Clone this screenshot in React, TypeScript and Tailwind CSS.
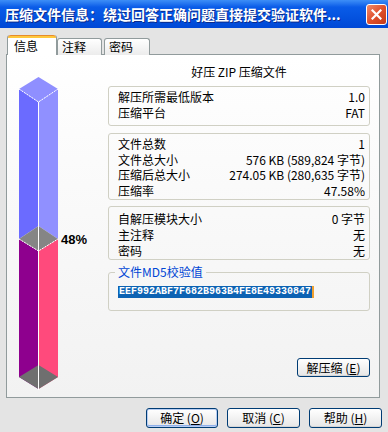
import React from 'react'

const cjk = "font-['Noto_Sans_CJK_SC','Liberation_Sans',sans-serif]"

function Row({ label, value }: { label: string; value: string }) {
  return (
    <div className="flex justify-between pl-[9px] pr-[4px]">
      <span>{label}</span>
      <span>{value}</span>
    </div>
  )
}

function XpButton({ label, keyChar, className = '', primary = false }: { label: string; keyChar: string; className?: string; primary?: boolean }) {
  return (
    <button
      type="button"
      className={`flex items-center justify-center rounded-[3px] border border-[#003c74] bg-linear-to-b from-white to-[#e6e6e6] text-[12px] leading-none text-black ${
        primary ? 'shadow-[inset_0_0_0_1px_#b7cdf3,inset_0_-1px_0_1px_#8fb0ea]' : 'shadow-[inset_0_-1px_0_0_#d6d6d6]'
      } ${className}`}
    >
      {label} (<span className="underline">{keyChar}</span>)
    </button>
  )
}

function Bar() {
  return (
    <svg width="40" height="314" viewBox="0 0 40 314" className="block">
      {/* upper part */}
      <polygon points="0,12 19.5,25 19.5,149 0,162" fill="#6b6bff" />
      <polygon points="19.5,25 39,12 39,162 19.5,149" fill="#9090ff" />
      <polygon points="19.5,0 39,12 19.5,25 0,12" fill="#8f8fff" />
      {/* lower part */}
      <polygon points="0,162 19.5,174 19.5,312 0,300" fill="#8e008e" />
      <polygon points="19.5,174 39,162 39,300 19.5,312" fill="#ff4a7c" />
      <polygon points="19.5,149 39,162 19.5,174 0,162" fill="#858585" />
      <polygon points="19.5,288 39,300 19.5,312 0,300" fill="#6f6f6f" />
      {/* highlight edges */}
      <polyline points="0,12 19.5,25 39,12" fill="none" stroke="#fff" strokeWidth="1" strokeDasharray="2 1" />
      <polyline points="0,162 19.5,174 39,162" fill="none" stroke="#fff" strokeWidth="1" strokeDasharray="2 1" />
      <line x1="19.5" y1="25" x2="19.5" y2="313" stroke="#fff" strokeWidth="1" />
    </svg>
  )
}

export default function App() {
  return (
    <div className={`w-[388px] h-[432px] overflow-hidden bg-[#e4e4e4] text-[12px] text-black ${cjk}`}>
      {/* title bar */}
      <div className="flex h-[28px] items-center justify-between bg-linear-to-b from-[#3d8ef7] via-[#0a5ce8] via-25% to-[#0048d6] pl-[5px] pr-[1px]">
        <span className="text-[14px] font-bold text-white [text-shadow:1px_1px_0_#0a2a8c] whitespace-nowrap">
          压缩文件信息：绕过回答正确问题直接提交验证软件...
        </span>
        <div className="flex h-[21px] w-[21px] items-center justify-center rounded-[3px] border border-white bg-linear-to-br from-[#f08a6a] via-[#e0502c] to-[#c23a18]">
          <svg width="11" height="11" viewBox="0 0 11 11">
            <path d="M1.5 1.5 L9.5 9.5 M9.5 1.5 L1.5 9.5" stroke="#fff" strokeWidth="2.2" strokeLinecap="square" />
          </svg>
        </div>
      </div>

      {/* tabs */}
      <div className="relative z-10 mt-[7px] mb-[-1px] flex items-end pl-[7px]">
        <div className="flex h-[20px] w-[50px] flex-col rounded-t-[3px] border-x border-[#919b9c] bg-white">
          <div className="h-[3px] rounded-t-[3px] bg-[#ffc83c] border-t border-[#e68b2c]" />
          <div className="pl-[6px] leading-[15px]">信息</div>
        </div>
        <div className="flex h-[17px] w-[45px] items-center rounded-t-[3px] border border-b-0 border-[#919b9c] bg-linear-to-b from-white to-[#ececec] pl-[4px]">
          注释
        </div>
        <div className="ml-[2px] flex h-[17px] w-[46px] items-center rounded-t-[3px] border border-b-0 border-[#919b9c] bg-linear-to-b from-white to-[#ececec] pl-[4px]">
          密码
        </div>
      </div>

      {/* panel */}
      <div className="mx-[6px] flex h-[344px] w-[374px] border border-[#919b9c] bg-linear-to-b from-white to-[#f2f2f2]">
        <div className="flex w-[101px] items-start pl-[12px] pt-[22px]">
          <Bar />
          <span className="ml-[2px] mt-[156px] text-[13px] font-bold leading-[14px] font-['Liberation_Sans',sans-serif]">48%</span>
        </div>

        <div className="flex w-[262px] flex-col pt-[9px]">
          <div className="text-center leading-[16px]">好压 ZIP 压缩文件</div>

          <div className="mt-[6px] rounded-[3px] border border-[#d0d0c4] pt-[2px] pb-[4px] leading-[16px]">
            <Row label="解压所需最低版本" value="1.0" />
            <Row label="压缩平台" value="FAT" />
          </div>

          <div className="mt-[7px] rounded-[3px] border border-[#d0d0c4] pt-[2px] pb-[1px] leading-[15.5px]">
            <Row label="文件总数" value="1" />
            <Row label="文件总大小" value="576 KB (589,824 字节)" />
            <Row label="压缩后总大小" value="274.05 KB (280,635 字节)" />
            <Row label="压缩率" value="47.58%" />
          </div>

          <div className="mt-[6px] rounded-[3px] border border-[#d0d0c4] pt-[4px] leading-[16px]">
            <Row label="自解压模块大小" value="0 字节" />
            <Row label="主注释" value="无" />
            <Row label="密码" value="无" />
          </div>

          <fieldset className="mt-[6px] min-w-0 rounded-[3px] border border-[#d0d0c4] pb-[12px]">
            <legend className="ml-[6px] px-[3px] leading-[12px] text-[#0046d5]">文件MD5校验值</legend>
            <div className="ml-[9px] mt-[8px] flex items-center">
              <span className="bg-[#0c62b3] px-[1px] text-[10px] font-bold leading-[12px] text-white font-['Liberation_Mono',monospace]">
                EEF992ABF7F682B963B4FE8E49330847
              </span>
              <span className="h-[12px] w-[2px] bg-[#f0a030]" />
            </div>
          </fieldset>

          <XpButton label="解压缩" keyChar="E" className="mt-[47px] h-[19px] w-[73px] self-end" />
        </div>
      </div>

      {/* bottom buttons */}
      <div className="mt-[10px] flex justify-end gap-[9px] pr-[6px]">
        <XpButton label="确定" keyChar="O" primary className="h-[20px] w-[72px]" />
        <XpButton label="取消" keyChar="C" className="h-[20px] w-[73px]" />
        <XpButton label="帮助" keyChar="H" className="h-[20px] w-[73px]" />
      </div>
    </div>
  )
}
